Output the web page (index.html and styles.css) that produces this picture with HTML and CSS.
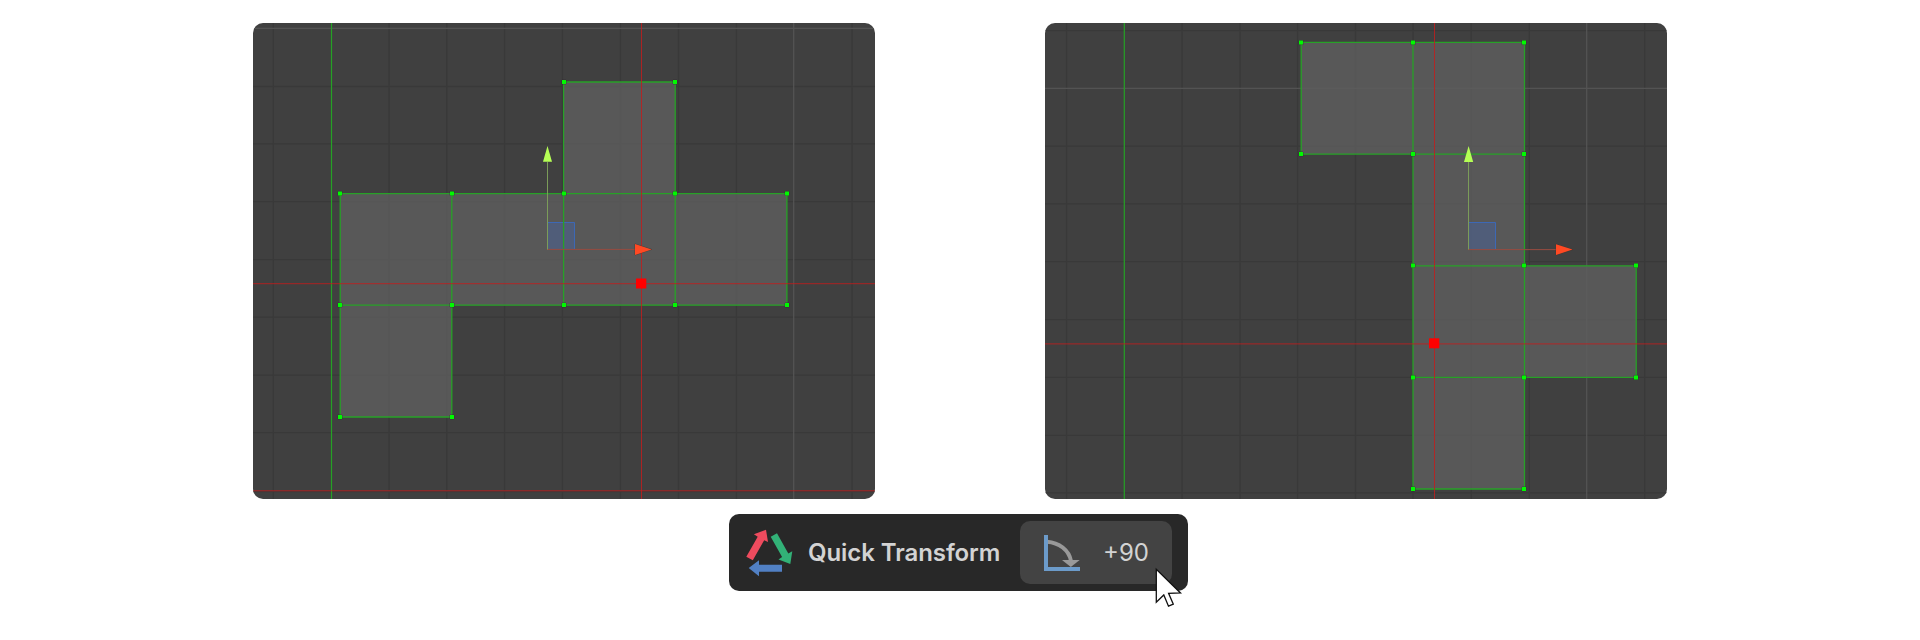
FILE: index.html
```html
<!DOCTYPE html>
<html lang="en">
<head>
<meta charset="utf-8">
<title>Quick Transform</title>
<link rel="stylesheet" href="styles.css">
</head>
<body>
<main class="page">
  <section class="viewports">
    <svg class="viewport" viewBox="253 23 622 476">
      <path class="grid" d="M273.3 23V499M389 23V499M446.8 23V499M504.6 23V499M562.4 23V499M620.4 23V499M678.5 23V499M736.4 23V499M852 23V499M253 86.500H875M253 143.900H875M253 201.700H875M253 259.600H875M253 317.200H875M253 375.200H875M253 432.700H875M253 491.500H875"/>
      <path class="grid-major" d="M793.700 23V499M253 28.400H875"/>
      <path class="face" d="M563.600 82H675.200V193.600H786.900V305.200H451.800V417H340.200V193.600H563.600Z"/>
      <path class="axis-y" d="M331.500 23V499"/>
      <path class="gizmo-plane" d="M547.500 222.500H574.500V249.500H547.500Z"/>
      <path class="gizmo-plane-edge" d="M547 222.500H574.500V249"/>
      <path class="edge" d="M563.600 82H675.200V193.600H786.900V305.200H451.800V417H340.200V193.600H563.600ZM563.600 193.600H675.200M340.200 305.200H451.800M451.800 193.600V305.200M563.600 193.600V305.200M675.200 193.600V305.200"/>
      <path class="gizmo-x" d="M547 249.400H635"/>
      <path class="gizmo-y" d="M547.500 249.500V162"/>
      <path class="guide" d="M253 283.700H875M253 490.800H875M641.500 23V499"/>
      <path class="head-x" d="M635 244V255L651.500 249.400Z"/>
      <path class="head-y" d="M543 161.800H552L547.500 146Z"/>
      <path class="vertex" d="M562 80h4v4h-4zM673 80h4v4h-4zM338 191.400h4v4h-4zM450 191.400h4v4h-4zM562 191.400h4v4h-4zM673 191.400h4v4h-4zM785 191.400h4v4h-4zM338 303h4v4h-4zM450 303h4v4h-4zM562 303h4v4h-4zM673 303h4v4h-4zM785 303h4v4h-4zM338 415h4v4h-4zM450 415h4v4h-4z"/>
      <path class="pivot" d="M636 278.500h10.300v10h-10.300z"/>
    </svg>
    <svg class="viewport" viewBox="1045 23 622 476">
      <path class="grid" d="M1066.600 23V499M1182 23V499M1240 23V499M1297.600 23V499M1355.500 23V499M1413 23V499M1471.200 23V499M1529.300 23V499M1644.700 23V499M1045 30.600H1667M1045 146.200H1667M1045 203.900H1667M1045 261.700H1667M1045 319.600H1667M1045 377.300H1667M1045 435.400H1667M1045 492.900H1667"/>
      <path class="grid-major" d="M1586.700 23V499M1045 88.300H1667"/>
      <path class="face" d="M1301.200 42.400H1524.500V265.800H1636.200V377.400H1524.500V489H1413V154.100H1301.200Z"/>
      <path class="axis-y" d="M1124.300 23V499"/>
      <path class="gizmo-plane" d="M1468.500 222.500H1495.500V249.500H1468.500Z"/>
      <path class="gizmo-plane-edge" d="M1468 222.500H1495.500V249"/>
      <path class="edge" d="M1301.200 42.400H1524.500V265.800H1636.200V377.400H1524.500V489H1413V154.100H1301.200ZM1413 42.400V154.100H1524.500M1413 265.800H1524.500V377.400H1413"/>
      <path class="gizmo-x" d="M1468 249.600H1556"/>
      <path class="gizmo-y" d="M1468.500 249.500V162"/>
      <path class="guide" d="M1045 343.900H1667M1434.500 23V499"/>
      <path class="head-x" d="M1556 244.300V255L1572.500 249.600Z"/>
      <path class="head-y" d="M1464 162H1473.200L1468.600 146Z"/>
      <path class="vertex" d="M1299 40.600h4v4h-4zM1411 40.600h4v4h-4zM1522 40.600h4v4h-4zM1299 152h4v4h-4zM1411 152h4v4h-4zM1522 152h4v4h-4zM1411 263.500h4v4h-4zM1522 263.500h4v4h-4zM1634 263.500h4v4h-4zM1411 375.400h4v4h-4zM1522 375.400h4v4h-4zM1634 375.400h4v4h-4zM1411 487h4v4h-4zM1522 487h4v4h-4z"/>
      <path class="pivot" d="M1429 338.300h10.300v10h-10.300z"/>
    </svg>
  </section>
  <section class="toolbar">
    <svg class="logo" viewBox="745 527 50 50">
      <path fill="#ee4b5e" d="M766 528.700L768 540.900L764.200 539.200L752.800 559.200L746.300 555.800L757.700 535.700L753.900 533.300Z"/>
      <path fill="#32b177" d="M770.700 535.700L777 532.300L788.300 552.500L792.300 550.300L790.300 562.900L778.500 558.500L782.100 556Z"/>
      <path fill="#5180c4" d="M748.700 567L759 559.200V563.700H782V570.700H759V575.200Z"/>
    </svg>
    <span class="title">Quick Transform</span>
    <div class="action">
      <svg class="angle" viewBox="1042 533 40 40">
        <path fill="none" stroke="#999" stroke-width="4" d="M1047 541.700C1059 542.500 1069 550 1071 561"/>
        <path fill="#999" d="M1062 560H1079.700L1070.800 567Z"/>
        <path fill="#6c9bca" d="M1044 535H1048V567H1080V571H1044Z"/>
      </svg>
      <span class="value">+90</span>
      <svg class="cursor" viewBox="1153 565 32 44">
        <path fill="#fff" stroke="#111" stroke-width="1.300" d="M1156.300 568.300V601.300L1163.800 594L1168.500 605.200L1173.300 603.200L1168.600 592.300L1180.500 592Z"/>
      </svg>
    </div>
  </section>
</main>
</body>
</html>
```
FILE: styles.css
```css
body {
  margin: 0;
  background: #fff;
  font-family: Inter, sans-serif;
}

.page {
  display: flex;
  flex-direction: column;
  align-items: center;
  box-sizing: border-box;
  width: 1920px;
  height: 640px;
  padding-top: 23px;
  gap: 15px;
}

.viewports {
  display: flex;
  gap: 170px;
}

.viewport {
  display: block;
  width: 622px;
  height: 476px;
  border-radius: 10px;
  background: #404040;
}

.grid,
.grid-major,
.axis-y,
.edge,
.guide,
.gizmo-x,
.gizmo-y {
  fill: none;
}

.grid { stroke: #393939; stroke-width: 1.3; }
.grid-major { stroke: #535353; stroke-width: 1.3; }
.face { fill: rgba(94, 94, 94, 0.8); }
.axis-y { stroke: #25a125; stroke-width: 1.2; }
.edge { stroke: #27a127; stroke-width: 1.3; }
.guide { stroke: #c51b1b; stroke-opacity: 0.8; }
.vertex { fill: #00fa00; stroke: #2c1f2c; stroke-opacity: 0.5; paint-order: stroke; }
.pivot { fill: #f00; }
.gizmo-plane { fill: rgba(72, 98, 153, 0.5); }
.gizmo-plane-edge { fill: none; stroke: #3d68b5; }
.gizmo-x { stroke: #974c40; }
.gizmo-y { stroke: #7b9c59; }
.head-x { fill: #ff4923; stroke: #4a302a; stroke-opacity: 0.6; paint-order: stroke; }
.head-y { fill: #b5ff55; }

.toolbar {
  display: flex;
  align-items: center;
  box-sizing: border-box;
  width: 459px;
  height: 77px;
  margin-right: 3px;
  padding: 0 16px;
  border-radius: 10px;
  background: #282828;
}

.logo {
  flex: none;
  width: 50px;
  height: 50px;
}

.title {
  flex: none;
  width: 212px;
  margin-left: 13px;
  color: #d3d3d3;
  font-size: 24px;
  font-weight: 600;
  letter-spacing: -0.07px;
  line-height: 30px;
  white-space: nowrap;
}

.action {
  position: relative;
  display: flex;
  flex: none;
  align-items: center;
  box-sizing: border-box;
  width: 152px;
  height: 63px;
  padding-left: 22px;
  border-radius: 10px;
  background: #434343;
}

.angle {
  width: 40px;
  height: 40px;
}

.value {
  margin-left: 21px;
  color: #d3d3d3;
  font-size: 24px;
  font-weight: 400;
  line-height: 30px;
}

.cursor {
  position: absolute;
  left: 133px;
  top: 45px;
  width: 32px;
  height: 44px;
}
```
